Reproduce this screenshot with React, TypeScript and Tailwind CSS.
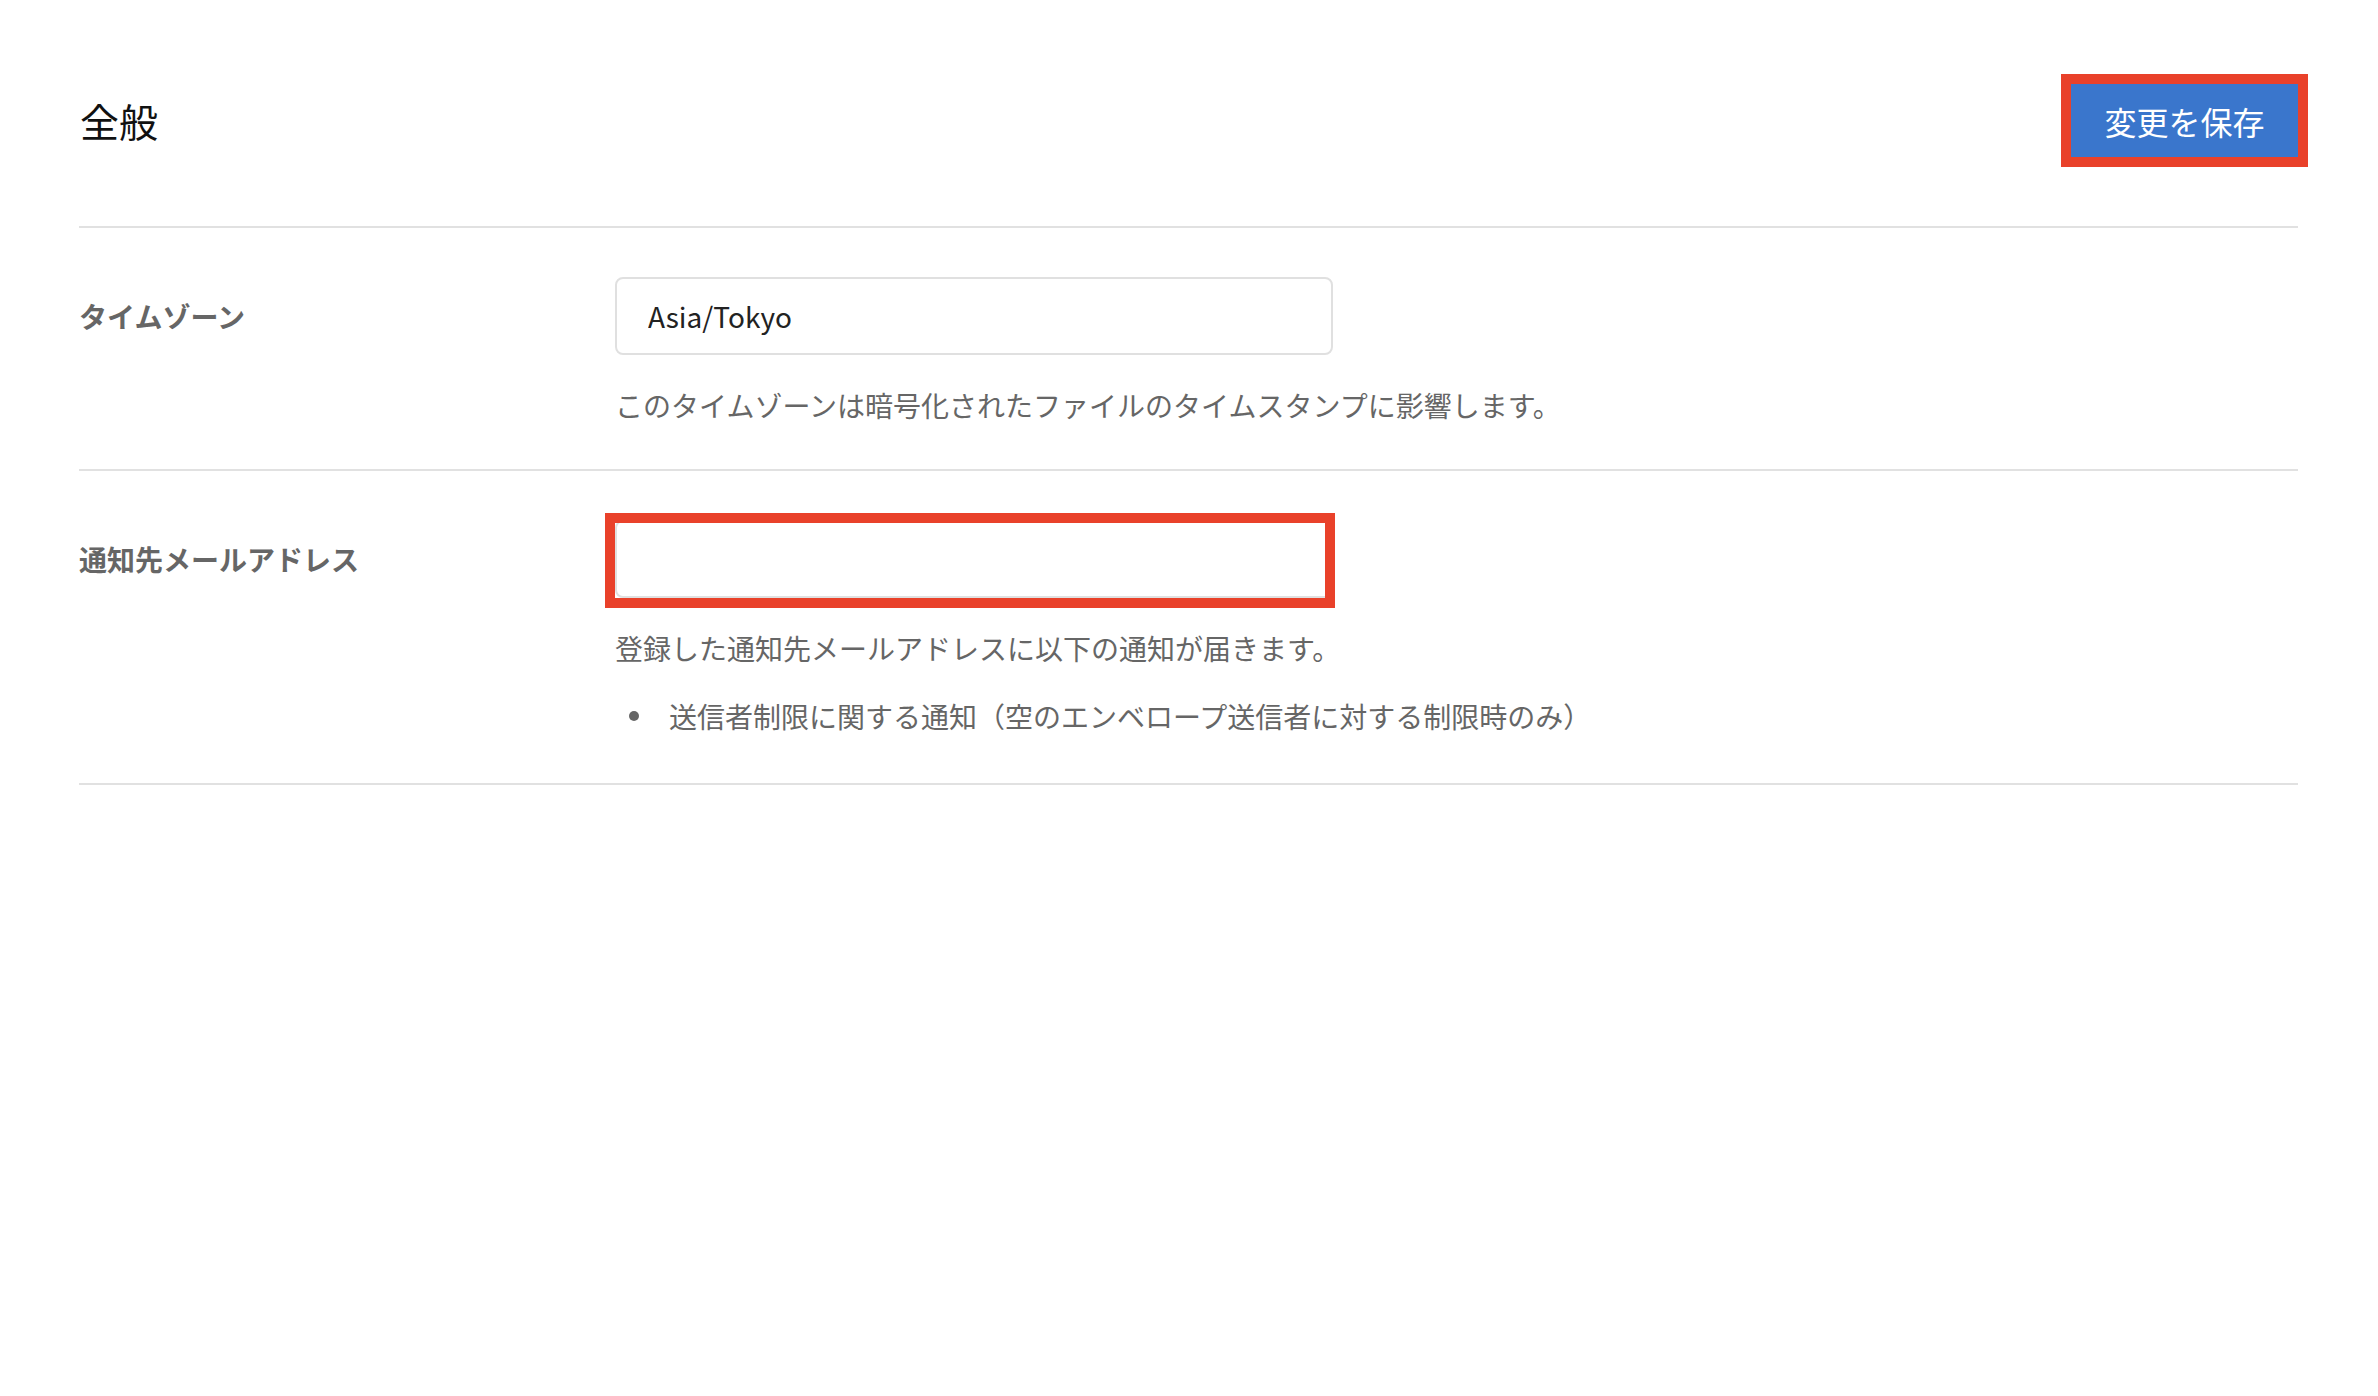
import React from 'react';

const font = "font-['Noto_Sans_CJK_JP','Noto_Sans',sans-serif]";

export default function App() {
  return (
    <div className={`min-h-screen bg-white pl-[79px] pr-[80px] ${font}`}>
      {/* Header */}
      <div className="flex items-center justify-between pt-[84px] pb-[69px] border-b-2 border-[#e1e1e1]">
        <h1 className="text-[39px] leading-none text-[#111] pl-[1px]">全般</h1>
        <button className="h-[73px] w-[227px] bg-[#3a76cc] text-white text-[32px] leading-none outline-[10px] outline-solid outline-[#e9412a]">
          変更を保存
        </button>
      </div>

      {/* Timezone */}
      <div className="flex pt-[49px] pb-[43px] border-b-2 border-[#e1e1e1]">
        <div className="w-[536px] h-[78px] flex items-center text-[28px] font-bold text-[#666]">タイムゾーン</div>
        <div>
          <input
            readOnly
            value="Asia/Tokyo"
            className="block w-[718px] h-[78px] border-2 border-[#e0e0e0] rounded-[8px] pl-[31px] text-[28px] text-[#222] outline-none"
          />
          <p className="mt-[29px] text-[28px] leading-[42px] text-[#666]">
            このタイムゾーンは暗号化されたファイルのタイムスタンプに影響します。
          </p>
        </div>
      </div>

      {/* Notification email */}
      <div className="flex pt-[49px] pb-[46px] border-b-2 border-[#e1e1e1]">
        <div className="w-[536px] h-[78px] flex items-center text-[28px] font-bold text-[#666]">通知先メールアドレス</div>
        <div>
          <div className="relative w-[718px]">
            <input
              readOnly
              value=""
              className="block w-[718px] h-[78px] border-2 border-[#e0e0e0] rounded-[8px] pl-[31px] text-[28px] text-[#222] outline-none"
            />
            <div className="absolute -left-[10px] -right-[2px] -top-[7px] -bottom-[10px] border-[10px] border-[#e9412a]" />
          </div>
          <p className="mt-[29px] text-[28px] leading-[42px] text-[#666]">
            登録した通知先メールアドレスに以下の通知が届きます。
          </p>
          <ul className="mt-[26px]">
            <li className="flex items-center text-[28px] leading-[42px] text-[#666]">
              <span className="ml-[14px] w-[10px] h-[10px] rounded-full bg-[#666] shrink-0" />
              <span className="ml-[30px]">送信者制限に関する通知（空のエンベロープ送信者に対する制限時のみ）</span>
            </li>
          </ul>
        </div>
      </div>
    </div>
  );
}
